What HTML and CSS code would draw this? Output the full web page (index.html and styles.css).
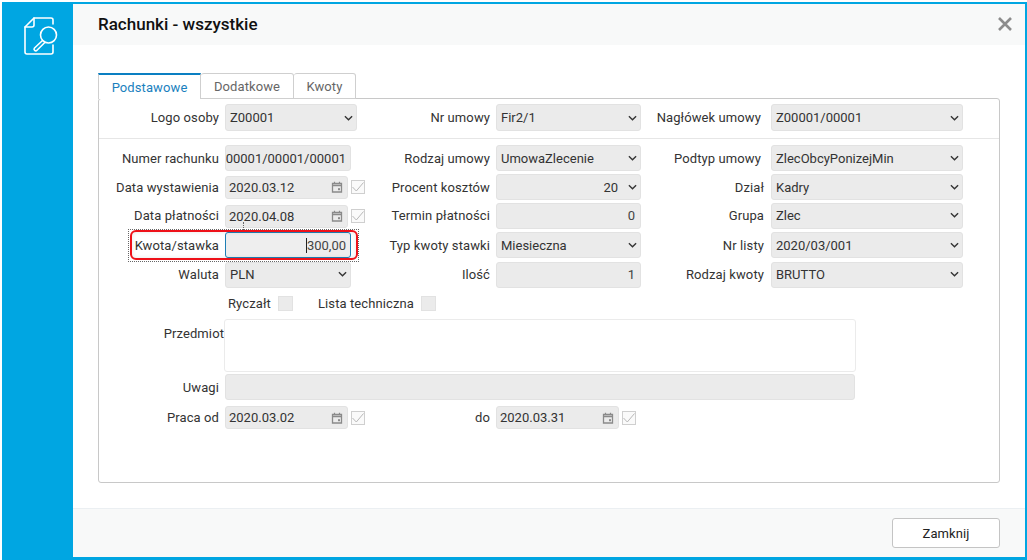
FILE: index.html
```html
<!DOCTYPE html>
<html lang="pl">
<head>
<meta charset="utf-8">
<title>Rachunki - wszystkie</title>
<link rel="stylesheet" href="styles.css">
</head>
<body>
<svg class="defs" width="0" height="0">
  <symbol id="chev" viewBox="0 0 10 6"><path d="M1 1l4 4 4-4" fill="none" stroke="#333" stroke-width="1.5"/></symbol>
  <symbol id="cal" viewBox="0 0 12 12"><path d="M1.5 2.5h9v8.5h-9z M1.5 4.5h9" fill="none" stroke="#8a8a8a" stroke-width="1.3"/><path d="M3.5 .8v2M8.5 .8v2" stroke="#8a8a8a" stroke-width="1.2"/><rect x="7" y="7.2" width="2" height="2" fill="#8a8a8a"/></symbol>
  <symbol id="chk" viewBox="0 0 12 10"><path d="M.5 5l3.800 4L11.500 .5" fill="none" stroke="#b8b8b8" stroke-width="1"/></symbol>
</svg>
<div class="window">
  <aside class="side">
    <svg class="logo" width="36" height="38" viewBox="0 0 36 38" fill="none" stroke="#fff" stroke-width="1.6" stroke-linecap="round" stroke-linejoin="round">
      <path d="M29 7V3a2 2 0 0 0-2-2H10L1 10v25a2 2 0 0 0 2 2h24a2 2 0 0 0 2-2v-7"/>
      <path d="M10 1v7a2 2 0 0 1-2 2H1"/>
      <circle cx="24.500" cy="18" r="8"/>
      <path d="M18.500 23.500l-8 7.500a1.700 1.700 0 0 0 2.500 2.300l7.800-7.800"/>
    </svg>
  </aside>
  <main class="main">
    <header class="head">
      <h1 class="title">Rachunki - wszystkie</h1>
      <svg class="close" width="16" height="16" viewBox="0 0 16 16"><path d="M2 2l12 12M14 2L2 14" stroke="#8c8c8c" stroke-width="2.600"/></svg>
    </header>
    <section class="body">
      <nav class="tabs">
        <div class="tab active">Podstawowe</div>
        <div class="tab t2">Dodatkowe</div>
        <div class="tab t3">Kwoty</div>
      </nav>
      <div class="panel">
        <div class="row r0">
          <div class="lab">Logo osoby</div>
          <div class="cell"><div class="ctl sel w132"><span>Z00001</span><svg class="chev"><use href="#chev"/></svg></div></div>
          <div class="lab">Nr umowy</div>
          <div class="cell"><div class="ctl sel"><span>Fir2/1</span><svg class="chev"><use href="#chev"/></svg></div></div>
          <div class="lab pr3">Nagłówek umowy</div>
          <div class="cell c3"><div class="ctl sel"><span>Z00001/00001</span><svg class="chev"><use href="#chev"/></svg></div></div>
        </div>
        <div class="divider"></div>
        <div class="row">
          <div class="lab">Numer rachunku</div>
          <div class="cell"><div class="ctl w126 clip"><span>00001/00001/00001</span></div></div>
          <div class="lab">Rodzaj umowy</div>
          <div class="cell"><div class="ctl sel"><span>UmowaZlecenie</span><svg class="chev"><use href="#chev"/></svg></div></div>
          <div class="lab pr3">Podtyp umowy</div>
          <div class="cell c3"><div class="ctl sel"><span>ZlecObcyPonizejMin</span><svg class="chev"><use href="#chev"/></svg></div></div>
        </div>
        <div class="row">
          <div class="lab">Data wystawienia</div>
          <div class="cell dated"><div class="ctl date"><span>2020.03.12</span><svg class="cal"><use href="#cal"/></svg></div><div class="box"><svg class="tick"><use href="#chk"/></svg></div></div>
          <div class="lab">Procent kosztów</div>
          <div class="cell"><div class="ctl sel num"><span>20</span><svg class="chev"><use href="#chev"/></svg></div></div>
          <div class="lab">Dział</div>
          <div class="cell c3"><div class="ctl sel"><span>Kadry</span><svg class="chev"><use href="#chev"/></svg></div></div>
        </div>
        <div class="row up">
          <div class="lab">Data płatności</div>
          <div class="cell dated"><div class="ctl date"><span>2020.04.08</span><svg class="cal"><use href="#cal"/></svg></div><div class="box"><svg class="tick"><use href="#chk"/></svg></div></div>
          <div class="lab">Termin płatności</div>
          <div class="cell"><div class="ctl right"><span>0</span></div></div>
          <div class="lab">Grupa</div>
          <div class="cell c3"><div class="ctl sel"><span>Zlec</span><svg class="chev"><use href="#chev"/></svg></div></div>
        </div>
        <div class="row hl">
          <span class="connector"></span>
          <div class="lab">Kwota/stawka</div>
          <div class="cell"><div class="ctl w126 right focus"><span class="caret">300,00</span></div></div>
          <div class="lab">Typ kwoty stawki</div>
          <div class="cell"><div class="ctl sel"><span>Miesieczna</span><svg class="chev"><use href="#chev"/></svg></div></div>
          <div class="lab">Nr listy</div>
          <div class="cell c3"><div class="ctl sel"><span>2020/03/001</span><svg class="chev"><use href="#chev"/></svg></div></div>
          <span class="mark-dots"></span>
          <span class="mark-red"></span>
        </div>
        <div class="row r5 up">
          <div class="lab">Waluta</div>
          <div class="cell"><div class="ctl sel w126"><span>PLN</span><svg class="chev"><use href="#chev"/></svg></div></div>
          <div class="lab">Ilość</div>
          <div class="cell"><div class="ctl right"><span>1</span></div></div>
          <div class="lab">Rodzaj kwoty</div>
          <div class="cell c3"><div class="ctl sel"><span>BRUTTO</span><svg class="chev"><use href="#chev"/></svg></div></div>
        </div>
        <div class="flags">
          <span class="flag f1">Ryczałt</span><span class="box sq"></span>
          <span class="flag f2">Lista techniczna</span><span class="box sq"></span>
        </div>
        <div class="wide area">
          <div class="lab lab-top">Przedmiot</div>
          <div class="textarea"></div>
        </div>
        <div class="wide uwagi">
          <div class="lab">Uwagi</div>
          <div class="ctl long"></div>
        </div>
        <div class="row last">
          <div class="lab">Praca od</div>
          <div class="cell dated"><div class="ctl date"><span>2020.03.02</span><svg class="cal"><use href="#cal"/></svg></div><div class="box"><svg class="tick"><use href="#chk"/></svg></div></div>
          <div class="lab">do</div>
          <div class="cell dated"><div class="ctl date"><span>2020.03.31</span><svg class="cal"><use href="#cal"/></svg></div><div class="box"><svg class="tick"><use href="#chk"/></svg></div></div>
        </div>
      </div>
    </section>
    <footer class="foot"><button class="btn" type="button">Zamknij</button></footer>
  </main>
</div>
</body>
</html>
```
FILE: styles.css
```css
* { box-sizing: border-box; }
html, body { margin: 0; padding: 0; background: #fff; }
body { width: 1027px; height: 560px; overflow: hidden; font-family: Roboto, "Liberation Sans", sans-serif; font-size: 13px; letter-spacing: .1px; color: #333; }
.defs { position: absolute; }
.window { display: flex; width: 1025px; height: 558px; margin: 2px 0 0 2px; background: #00a6e2; padding: 2px 2px 3px 0; }
.side { width: 71px; flex: none; padding: 13px 0 0 22px; }
.logo { display: block; }
.main { flex: 1; display: flex; flex-direction: column; background: #fff; min-width: 0; }
.head { height: 41px; flex: none; display: flex; align-items: center; justify-content: space-between; background: #f8f9f9; padding: 0 12px 1px 25px; }
.title { margin: 0; font-size: 17px; font-weight: 500; letter-spacing: 0; color: #111; }
.body { flex: 1; padding: 28px 25px 0 25px; }
.tabs { display: flex; height: 25px; }
.tab { height: 26px; border: 1px solid #cfcfcf; border-bottom: 0; border-left: 0; border-radius: 3px 3px 0 0; color: #666; background: #fff; display: flex; align-items: center; justify-content: center; position: relative; z-index: 1; }
.tab.active { width: 103px; border: 1px solid #cfcfcf; border-top: 2px solid #0a7fc2; border-bottom: 0; border-radius: 0; color: #1a7fbe; }
.t2 { width: 93px; border-bottom: 1px solid #cfcfcf; }
.t3 { width: 62px; border-bottom: 1px solid #cfcfcf; }
.panel { height: 385px; width: 902px; border: 1px solid #c8c8c8; border-radius: 3px; padding-top: 5px; }
.row { display: grid; grid-template-columns: 120px 156px 115px 151px 123px 199px; height: 26px; margin-bottom: 3px; align-items: center; position: relative; }
.hl { z-index: 3; }
.r0 { height: 27px; margin-bottom: 0; }
.r5 { margin-top: 4px; margin-bottom: 0; }
.divider { height: 1px; background: #e6e6e6; margin: 7px 0 6px; }
.lab { text-align: right; white-space: nowrap; color: #333; line-height: 15px; }
.pr3 { padding-right: 3px; }
.up .lab { padding-bottom: 2px; }
.cell { padding-left: 6px; min-width: 0; }
.c3 { padding-left: 7px; }
.ctl { height: 26px; background: #ebebeb; border: 1px solid #e2e2e2; border-radius: 3px; display: flex; align-items: center; justify-content: space-between; padding: 0 4px 0 3px; white-space: nowrap; letter-spacing: 0; }
.up .ctl:not(.date) { padding-bottom: 2px; }
.r0 .ctl { height: 27px; }
.ctl > span:first-child { padding-left: 1px; }
.sel { padding-right: 3px; }
.chev { width: 9px; height: 6px; flex: none; }
.w132 { width: 132px; }
.w126 { width: 126px; }
.clip { justify-content: flex-end; overflow: hidden; padding: 0 4px 0 0; }
.right { justify-content: flex-end; padding-right: 5px; color: #444; }
.num { justify-content: flex-end; gap: 10px; }
.dated { display: flex; align-items: center; gap: 3px; }
.date { width: 123px; height: 23px; padding-right: 4px; }
.date > span:first-child { padding-left: 0; }
.cal { width: 12px; height: 12px; flex: none; }
.box { width: 14px; height: 14px; border: 1px solid #cfcfcf; background: #fafafa; display: flex; align-items: center; justify-content: center; flex: none; }
.tick { width: 12px; height: 10px; }
.focus { border-color: #1f7fb5; background: #eeeeee; padding-right: 4px; }
.focus .caret { padding-left: 0; box-shadow: inset 1px 0 0 #222; }
.connector { position: absolute; left: 144px; top: -10px; height: 8px; border-left: 1px dotted #666; }
.mark-dots { position: absolute; left: 29px; top: -3px; width: 231px; height: 33px; border: 1px dotted #666; pointer-events: none; }
.mark-red { position: absolute; left: 31px; top: -2px; width: 228px; height: 30px; border: 2px solid #ee1119; border-radius: 6px; box-shadow: inset 0 0 4px rgba(0,0,0,.1); pointer-events: none; }
.flags { display: flex; align-items: center; height: 16px; margin-top: 7px; }
.flag { white-space: nowrap; }
.f1 { margin-left: 129px; width: 50px; }
.f2 { margin-left: 25px; width: 103px; }
.sq { display: inline-block; width: 15px; height: 15px; background: #ebebeb; border-color: #e2e2e2; }
.wide { display: flex; }
.wide .lab { flex: none; width: 120px; }
.area { margin-top: 8px; height: 53px; }
.lab-top { width: 125px !important; padding-top: 7px; }
.textarea { width: 632px; height: 53px; background: #fff; border: 1px solid #ebebeb; border-radius: 3px; }
.uwagi { margin-top: 2px; align-items: center; }
.long { width: 630px; margin-left: 6px; }
.last { margin-top: 6px; height: 23px; }
.foot { height: 49px; flex: none; background: #f8f9f9; border-top: 1px solid #ebeff2; padding: 9px 25px 0 0; display: flex; justify-content: flex-end; align-items: flex-start; }
.btn { width: 108px; height: 30px; background: #fff; border: 1px solid #c4c4c4; border-radius: 3px; font: 13px Roboto, "Liberation Sans", sans-serif; letter-spacing: .1px; color: #222; }
```
